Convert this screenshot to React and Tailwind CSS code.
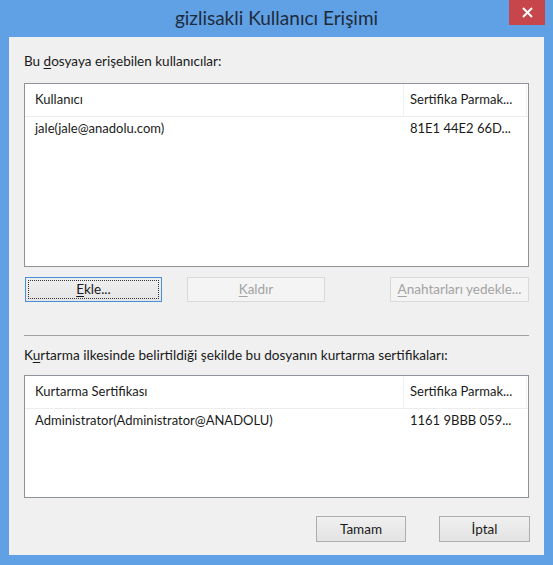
import React from "react";

const FONT = { fontFamily: 'Lato, "Noto Sans", sans-serif' };

function U({ children }) {
  return <span className="underline underline-offset-2">{children}</span>;
}

function ListView({ heightClass, col1, col2, row1, row2 }) {
  return (
    <div className={`mx-[15px] ${heightClass} border border-[#8e9299] bg-white`}>
      <div className="flex h-[33px] items-center border-b border-[#ececec] text-[13px] text-[#1a1a1a]">
        <div className="w-[378px] pl-[10px]">{col1}</div>
        <div className="flex h-full w-[124px] items-center border-l border-[#f0f0f0] border-r pl-[6px]">{col2}</div>
      </div>
      <div className="flex h-[24px] items-center text-[13px] text-[#1a1a1a]">
        <div className="w-[378px] pl-[10px]">{row1}</div>
        <div className="w-[124px] pl-[7px]">{row2}</div>
      </div>
    </div>
  );
}

function Btn({ children, className = "", disabled, focused }) {
  const base = "flex items-center justify-center text-[13.5px]";
  if (disabled)
    return (
      <div className={`${base} border border-[#dadada] bg-[#f4f4f4] text-[#a3a3a3] ${className}`}>{children}</div>
    );
  if (focused)
    return (
      <div className={`${base} border border-[#4a90d9] bg-gradient-to-b from-[#f0f0f0] to-[#e4e4e4] p-[2px] text-[#1a1a1a] ${className}`}>
        <div className="flex h-full w-full items-center justify-center border border-dotted border-[#333]">{children}</div>
      </div>
    );
  return (
    <div className={`${base} border border-[#adadad] bg-gradient-to-b from-[#f0f0f0] to-[#e3e3e3] text-[#1a1a1a] ${className}`}>{children}</div>
  );
}

export default function App() {
  return (
    <div className="h-[565px] w-[553px] bg-[#60a1e6]" style={FONT}>
      {/* title bar */}
      <div className="relative flex h-[37px] items-center justify-center">
        <span className="text-[19px] text-[#1f2b3a]">gizlisakli Kullanıcı Erişimi</span>
        <div className="absolute right-[8px] top-0 flex h-[25px] w-[36px] items-center justify-center bg-[#c7464b]">
          <svg width="11" height="11" viewBox="0 0 11 11">
            <path d="M1 1 L10 10 M10 1 L1 10" stroke="#fff" strokeWidth="2" />
          </svg>
        </div>
      </div>
      {/* client area */}
      <div className="mx-[9px] flex h-[518px] flex-col bg-[#f0f0f0]">
        <div className="mt-[16px] px-[15px] text-[13.5px] leading-[16px] text-[#1a1a1a]">
          Bu <U>d</U>osyaya erişebilen kullanıcılar:
        </div>
        <div className="mt-[14px]">
          <ListView
            heightClass="h-[184px]"
            col1="Kullanıcı"
            col2="Sertifika Parmak..."
            row1="jale(jale@anadolu.com)"
            row2="81E1 44E2 66D..."
          />
        </div>
        <div className="mt-[10px] flex px-[16px]">
          <Btn focused className="h-[25px] w-[137px]">
            <span><U>E</U>kle...</span>
          </Btn>
          <Btn disabled className="ml-[25px] h-[25px] w-[138px]">
            <span><U>K</U>aldır</span>
          </Btn>
          <Btn disabled className="ml-auto mr-[-1px] h-[25px] w-[139px]">
            <span><U>A</U>nahtarları yedekle...</span>
          </Btn>
        </div>
        <div className="mx-[15px] mt-[33px] border-t border-[#a0a0a0]" />
        <div className="mt-[11px] px-[15px] text-[13.6px] leading-[16px] text-[#1a1a1a]">
          K<U>u</U>rtarma ilkesinde belirtildiği şekilde bu dosyanın kurtarma sertifikaları:
        </div>
        <div className="mt-[12px]">
          <ListView
            heightClass="h-[123px]"
            col1="Kurtarma Sertifikası"
            col2="Sertifika Parmak..."
            row1="Administrator(Administrator@ANADOLU)"
            row2="1161 9BBB 059..."
          />
        </div>
        <div className="mt-[18px] flex justify-end gap-[33px] pr-[14px]">
          <Btn className="h-[26px] w-[90px]">Tamam</Btn>
          <Btn className="h-[26px] w-[91px]">İptal</Btn>
        </div>
      </div>
    </div>
  );
}
